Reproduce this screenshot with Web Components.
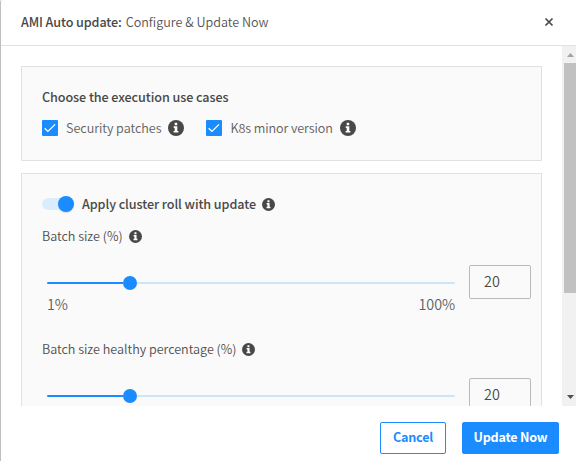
<!DOCTYPE html>
<html lang="en">
<head>
<meta charset="utf-8">
<title>AMI Auto update</title>
<style>
html, body { margin: 0; height: 100%; overflow: hidden; background: #fff; }
body { --strong-font: "Noto Sans CJK SC", "Noto Sans", sans-serif; font: 350 12.6px/20px "Noto Sans CJK SC DemiLight", "Noto Sans CJK SC", "Noto Sans", sans-serif; color: #555; }
.options { display: flex; margin-top: 11px; }
.options check-option + check-option { margin-left: 22px; letter-spacing: -0.09px; }
</style>
</head>
<body>
<modal-dialog>
  <span slot="title">AMI Auto update:</span>
  <span slot="subtitle">Configure &amp; Update Now</span>
  <form-panel style="height:93px">
    <field-label strong>Choose the execution use cases</field-label>
    <div class="options">
      <check-option>Security patches</check-option>
      <check-option>K8s minor version</check-option>
    </div>
  </form-panel>
  <form-panel style="height:300px">
    <toggle-switch>Apply cluster roll with update</toggle-switch>
    <range-field value="20" min="1%" max="100%">Batch size (%)</range-field>
    <range-field value="20" min="1%" max="100%">Batch size healthy percentage (%)</range-field>
  </form-panel>
  <action-button slot="actions">Cancel</action-button>
  <action-button slot="actions" primary>Update Now</action-button>
</modal-dialog>
<script>
function define(name, html) {
  const template = document.createElement('template');
  customElements.define(name, class extends HTMLElement {
    constructor() {
      super();
      template.innerHTML ||= html;
      this.attachShadow({ mode: 'open' }).append(template.content.cloneNode(true));
    }
    connectedCallback() {
      this.shadowRoot.querySelectorAll('[data-attr]').forEach(node => {
        node.textContent = this.getAttribute(node.dataset.attr) || '';
      });
    }
  });
}

define('info-icon', `
<style>
:host { display: block; width: var(--info-size, 13px); height: var(--info-size, 13px); flex: none; }
svg { display: block; width: 100%; height: 100%; }
</style>
<svg viewBox="0 0 16 16"><circle cx="8" cy="8" r="8" fill="#484848"/><path d="M6.7 2.8h2.5v2.4H6.700zM5.700 6.300h3.600v4.600h1.100v1.600H5.600v-1.600h1.100v-3h-1z" fill="#fff"/></svg>`);

define('field-label', `
<style>
:host { display: block; line-height: 20px; white-space: nowrap; letter-spacing: -0.02px; color: #505050; }
:host([strong]) { font-family: var(--strong-font); font-weight: 500; letter-spacing: -0.075px; color: #484848; }
</style><slot></slot>`);

define('check-option', `
<style>
:host { display: flex; align-items: center; height: 20px; white-space: nowrap; color: #606060; --info-size: 16px; letter-spacing: -0.03px; }
.box { width: 16px; height: 16px; border-radius: 1px; background: #1a8cff; margin-right: 8px; }
info-icon { margin-left: 7px; }
svg { display: block; }
</style>
<span class="box"><svg width="16" height="16" viewBox="0 0 16 16"><path d="M2.700 8.200l3.200 3.200 7.200-7" fill="none" stroke="#fff" stroke-width="1.300"/></svg></span>
<slot></slot><info-icon></info-icon>`);

define('toggle-switch', `
<style>
:host { display: flex; align-items: center; height: 20px; }
.track { display: flex; align-items: center; justify-content: flex-end; width: 32px; height: 12px; border-radius: 6px; background: #d9edff; margin-right: 8px; }
.knob { width: 16px; height: 16px; flex: none; border-radius: 50%; background: #1a8cff; box-shadow: 0 1px 1px #0002; }
info-icon { margin-left: 6px; }
</style>
<span class="track"><span class="knob"></span></span><field-label strong><slot></slot></field-label><info-icon></info-icon>`);

define('range-field', `
<style>
:host { display: block; height: 101px; padding-top: 12px; }
.label { display: flex; align-items: center; height: 20px; }
info-icon { margin-left: 6px; }
.control { display: flex; padding: 19px 0 0 5px; }
.range { width: 408px; padding-top: 11px; flex: none; }
.rail { display: flex; align-items: center; height: 14px; }
.done { width: 76px; height: 2px; background: #1a8cff; border-radius: 1px 0 0 1px; }
.thumb { width: 14px; height: 14px; border-radius: 50%; background: #1a8cff; }
.rest { flex: 1; height: 2px; background: #cde4fb; border-radius: 0 1px 1px 0; }
.ends { display: flex; justify-content: space-between; font-size: 14.4px; letter-spacing: -0.1px; line-height: 20px; margin-top: 4px; color: #606060; }
.value { box-sizing: border-box; width: 62px; height: 34px; margin-left: 14px; padding-left: 14px; border: 1px solid #bbb; border-radius: 2px; font-size: 14.4px; line-height: 30px; color: #484848; }
</style>
<div class="label"><field-label><slot></slot></field-label><info-icon></info-icon></div>
<div class="control">
  <div class="range">
    <div class="rail"><span class="done"></span><span class="thumb"></span><span class="rest"></span></div>
    <div class="ends"><span data-attr="min"></span><span data-attr="max"></span></div>
  </div>
  <div class="value" data-attr="value"></div>
</div>`);

define('form-panel', `
<style>
:host { display: block; box-sizing: content-box; border: 1px solid #e1e1e1; background: #fafafa; margin-bottom: 12px; flex: none; }
.inner { padding: 20px 0 0 20px; }
</style><div class="inner"><slot></slot></div>`);

define('scroll-bar', `
<style>
:host { display: flex; flex-direction: column; width: 14px; flex: none; background: #f1f1f1; }
.cap { height: 17px; flex: none; display: block; }
.thumb { height: 230px; background: #c1c1c1; margin-left: 2px; }
.space { flex: 1; }
</style>
<svg class="cap" width="14" height="17" viewBox="0 0 14 17"><path d="M5 11h7L8.500 7z" fill="#a3a3a3"/></svg>
<div class="thumb"></div><div class="space"></div>
<svg class="cap" width="14" height="17" viewBox="0 0 14 17"><path d="M5 6h7L8.500 10z" fill="#505050"/></svg>`);

define('action-button', `
<style>
:host { box-sizing: border-box; width: 66px; height: 32px; border: 1px solid #1a8cff; border-radius: 2px; color: #1a8cff; font-family: var(--strong-font); font-size: 12.6px; font-weight: 700; letter-spacing: -0.21px; line-height: 28px; text-align: center; white-space: nowrap; }
:host([primary]) { width: 97px; background: #1a8cff; color: #fff; }
</style><slot></slot>`);

define('modal-dialog', `
<style>
:host { display: flex; flex-direction: column; box-sizing: border-box; width: 576px; height: 461px; border-left: 1px solid #bfbfbf; border-top-left-radius: 2px; background: #fff; }
header { box-sizing: border-box; height: 46px; flex: none; display: flex; align-items: center; padding: 0 22px 1px 20px; border-bottom: 1px solid #e1e1e1; white-space: nowrap; }
.title { font-family: var(--strong-font); font-weight: 500; color: #484848; letter-spacing: -0.1px; margin-right: 4px; }
.close { margin-left: auto; display: block; }
.body { height: 360px; flex: none; display: flex; overflow: hidden; }
.content { flex: 1; padding: 20px 20px 0 20px; display: flex; flex-direction: column; overflow: hidden; }
footer { display: flex; gap: 16px; justify-content: flex-end; padding: 16px 17px 0 0; }
</style>
<header><span class="title"><slot name="title"></slot></span><slot name="subtitle"></slot>
<svg class="close" width="10" height="10" viewBox="0 0 10 10"><path d="M1.500 1.500l7 7M8.500 1.500l-7 7" stroke="#484848" stroke-width="1.700"/></svg></header>
<div class="body"><div class="content"><slot></slot></div><scroll-bar></scroll-bar></div>
<footer><slot name="actions"></slot></footer>`);
</script>
</body>
</html>
